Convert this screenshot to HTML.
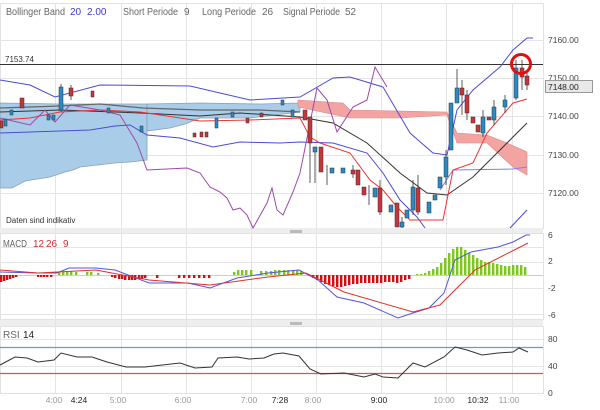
<!DOCTYPE html>
<html><head><meta charset="utf-8"><style>
body{margin:0;width:600px;height:410px;background:#fff;overflow:hidden;font-family:"Liberation Sans",sans-serif}
svg{position:absolute;left:0;top:0}
text{font-family:"Liberation Sans",sans-serif}
</style></head><body>
<svg width="600" height="410" viewBox="0 0 600 410">
<rect width="600" height="410" fill="#fff"/>
<rect x="0.5" y="3.5" width="543" height="225" fill="none" stroke="#e2e2e2"/>
<rect x="0.5" y="233.5" width="543" height="86" fill="none" stroke="#e2e2e2"/>
<rect x="0.5" y="326.5" width="543" height="67" fill="none" stroke="#e2e2e2"/>
<rect x="0" y="228" width="543" height="5" fill="#eee"/>
<rect x="0" y="320" width="543" height="6" fill="#eee"/>
<rect x="290" y="230" width="12" height="3" fill="#bbb"/>
<rect x="290" y="322" width="12" height="3" fill="#bbb"/>
<g stroke="#e4e4e4" stroke-width="1">
<path d="M55.5 4V393M121.5 4V393M186.5 4V393M251.5 4V393M316.5 4V393M381.5 4V393M446.5 4V393M512.5 4V393"/>
<path d="M0 40.5H543M0 78.5H543M0 116.5H543M0 155.5H543M0 193.5H543"/>
<path d="M0 247.5H543M0 262.5H543M0 288.5H543M0 314.5H543M0 339.5H543M0 366.5H543"/>
</g>
<path d="M0 103L60 104L140 104L147 104L147 160L130 162L115 163L80 167L73 170L65 172L50 177L25 181L12 188L0 188Z" fill="#a9cde8" stroke="#8aa0b0" stroke-width="0.8"/>
<path d="M147 104L200 103L260 104L300 103L300 112L250 118L200 118L185 124L170 128L147 131Z" fill="#a9cde8" stroke="#8aa0b0" stroke-width="0.8"/>
<path d="M298 100L343 103L350 110L447 112L457 133L487 135L507 143L527 152L527 175L513 167L487 143L457 143L447 115L400 118L350 118L298 107Z" fill="#f4a3a3" stroke="#d88" stroke-width="0.6"/>
<path d="M0 64.5H543" stroke="#333" stroke-width="1"/>
<g fill="none" stroke="#4b4bd6" stroke-width="1">
<path d="M0 80L30 85L55 97L100 85L190 86L250 100L300 97L333 78L350 77L383 87L410 133L433 153L447 155L457 110L473 90L500 67L513 50L527 38L533 38"/>
<path d="M0 133L60 131L90 130L115 126L130 125L147 135L180 138L213 147L240 142L280 143L300 142L333 143L367 153L383 173L400 200L417 217L425 228"/>
<path d="M510 228L527 210"/>
<path d="M440 190L453 170L513 169L527 167" stroke="#8080e8"/>
</g>
<path d="M0 112L60 110L140 113L200 116L240 113L300 117L333 123L367 143L400 173L427 193L447 195L473 177L500 150L527 123" fill="none" stroke="#333" stroke-width="1"/>
<path d="M0 108L60 106L100 104L143 108L200 110L260 110L300 112" fill="none" stroke="#666" stroke-width="1.2"/>
<path d="M0 120L30 118L60 112L100 110L140 112L200 121L250 120L300 118L310 137L320 143L350 153L370 180L383 190L397 207L410 220L443 220L453 170L473 163L487 133L513 103L527 99" fill="none" stroke="#e33" stroke-width="1"/>
<path d="M0 118L30 125L45 110L55 122L70 105L100 110L120 115L137 143L147 170L187 168L200 173L210 187L220 192L227 198L233 210L240 208L247 215L253 228L267 203L272 188L277 210L283 215L293 192L300 173L308 133L317 88L327 100L337 132L353 107L367 100L375 67L387 87" fill="none" stroke="#9a4aa8" stroke-width="1"/>
<g stroke="#333" stroke-width="0.8">
<path d="M310 117V183M315 147V183M327 165V185M402 217V228M418 175V215M446 150V185M457 69V103M462 80V115M467 90V120M483 110V137M494 100V125M505 95V113M516 60V100M522 60V90M527 72V90M61 84V112M71 85V100M353 165V178M369 185V205M380 180V215M413 180V215"/>
</g>
<g fill="#2a8ac4" stroke="#333" stroke-width="0.5">
<rect x="4" y="119" width="3" height="7"/><rect x="10" y="110" width="3" height="5"/><rect x="47" y="115" width="3" height="5"/><rect x="52" y="115" width="3" height="5"/><rect x="59" y="87" width="4" height="23"/><rect x="107" y="108" width="3" height="5"/><rect x="140" y="126" width="3" height="6"/><rect x="215" y="118" width="3" height="10"/><rect x="231" y="112" width="3" height="5"/><rect x="281" y="100" width="3" height="5"/><rect x="291" y="110" width="3" height="7"/>
<rect x="313" y="147" width="4" height="5"/><rect x="330" y="168" width="4" height="5"/><rect x="341" y="168" width="4" height="5"/><rect x="373" y="188" width="4" height="9"/><rect x="389" y="205" width="4" height="7"/><rect x="400" y="222" width="4" height="5"/><rect x="405" y="210" width="4" height="8"/><rect x="411" y="187" width="4" height="23"/><rect x="427" y="202" width="4" height="11"/><rect x="433" y="195" width="4" height="5"/><rect x="438" y="177" width="4" height="11"/><rect x="444" y="157" width="4" height="20"/><rect x="449" y="103" width="4" height="47"/><rect x="455" y="88" width="4" height="15"/><rect x="481" y="117" width="4" height="16"/><rect x="492" y="107" width="4" height="13"/><rect x="503" y="100" width="4" height="7"/><rect x="514" y="68" width="4" height="30"/>
</g>
<g fill="#c8343a" stroke="#333" stroke-width="0.5">
<rect x="0" y="121" width="3" height="7"/><rect x="20" y="98" width="4" height="10"/><rect x="69" y="88" width="4" height="8"/><rect x="91" y="91" width="3" height="6"/><rect x="193" y="133" width="3" height="4"/><rect x="200" y="132" width="3" height="5"/><rect x="205" y="132" width="3" height="5"/><rect x="246" y="118" width="3" height="5"/><rect x="260" y="113" width="3" height="4"/>
<rect x="303" y="110" width="4" height="10"/><rect x="308" y="117" width="4" height="26"/><rect x="319" y="147" width="4" height="25"/><rect x="351" y="170" width="4" height="4"/><rect x="356" y="170" width="4" height="15"/><rect x="362" y="187" width="4" height="8"/><rect x="378" y="188" width="4" height="24"/><rect x="395" y="203" width="4" height="24"/><rect x="416" y="188" width="4" height="24"/><rect x="460" y="88" width="4" height="7"/><rect x="465" y="95" width="4" height="18"/><rect x="471" y="117" width="4" height="6"/><rect x="476" y="125" width="4" height="7"/><rect x="487" y="117" width="4" height="3"/><rect x="520" y="68" width="4" height="9"/><rect x="525" y="76" width="4" height="9"/>
</g>
<circle cx="521" cy="64" r="9.5" fill="none" stroke="#e01010" stroke-width="3"/>
<g font-size="10" fill="#666">
<text x="6" y="15" textLength="59" lengthAdjust="spacingAndGlyphs">Bollinger Band</text><text x="70" y="15" fill="#3a3acc">20</text><text x="87" y="15" fill="#3a3acc">2.00</text>
<text x="123" y="15" textLength="55" lengthAdjust="spacingAndGlyphs">Short Periode</text><text x="184" y="15">9</text>
<text x="202" y="15" textLength="54" lengthAdjust="spacingAndGlyphs">Long Periode</text><text x="262" y="15">26</text>
<text x="283" y="15" textLength="57" lengthAdjust="spacingAndGlyphs">Signal Periode</text><text x="345" y="15">52</text>
</g>
<text x="5" y="62" font-size="8" fill="#333">7153.74</text>
<text x="6" y="223" font-size="8" fill="#333">Daten sind indikativ</text>
<g font-size="8.5" fill="#444">
<text x="548" y="43">7160.00</text><text x="548" y="81">7150.00</text><text x="548" y="119">7140.00</text><text x="548" y="158">7130.00</text><text x="548" y="196">7120.00</text>
</g>
<rect x="545.5" y="80.5" width="47" height="12" fill="#e8e8e8" stroke="#999"/>
<text x="548" y="90" font-size="8.5" fill="#222">7148.00</text>
<path d="M0 275.5H543" stroke="#ccc"/>
<g fill="#d01010">
<rect x="0" y="275" width="2.4" height="7"/><rect x="3" y="275" width="2.4" height="6"/><rect x="6" y="275" width="2.4" height="5"/><rect x="9" y="275" width="2.4" height="4"/><rect x="12" y="275" width="2.4" height="3"/><rect x="15" y="275" width="2.4" height="2"/>
<rect x="37" y="275" width="2.4" height="2"/><rect x="40" y="275" width="2.4" height="2"/><rect x="43" y="275" width="2.4" height="2"/><rect x="46" y="275" width="2.4" height="2"/><rect x="50" y="275" width="2.4" height="2"/>
<rect x="111" y="275" width="2.4" height="2"/><rect x="114" y="275" width="2.4" height="3"/><rect x="118" y="275" width="2.4" height="4"/><rect x="121" y="275" width="2.4" height="4"/><rect x="124" y="275" width="2.4" height="5"/><rect x="128" y="275" width="2.4" height="5"/><rect x="131" y="275" width="2.4" height="5"/><rect x="134" y="275" width="2.4" height="5"/><rect x="138" y="275" width="2.4" height="4"/><rect x="141" y="275" width="2.4" height="4"/><rect x="144" y="275" width="2.4" height="3"/><rect x="156" y="275" width="2.4" height="3"/>
<rect x="178" y="275" width="2.4" height="3"/><rect x="183" y="275" width="2.4" height="3"/><rect x="188" y="275" width="2.4" height="3"/><rect x="193" y="275" width="2.4" height="3"/><rect x="198" y="275" width="2.4" height="3"/><rect x="203" y="275" width="2.4" height="3"/><rect x="208" y="275" width="2.4" height="3"/>
<rect x="312" y="275" width="2.4" height="3"/><rect x="316" y="275" width="2.4" height="5"/><rect x="320" y="275" width="2.4" height="7"/><rect x="324" y="275" width="2.4" height="9"/><rect x="328" y="275" width="2.4" height="10"/><rect x="332" y="275" width="2.4" height="11"/><rect x="336" y="275" width="2.4" height="12"/><rect x="340" y="275" width="2.4" height="12"/><rect x="344" y="275" width="2.4" height="11"/><rect x="348" y="275" width="2.4" height="10"/><rect x="352" y="275" width="2.4" height="9"/><rect x="356" y="275" width="2.4" height="9"/><rect x="360" y="275" width="2.4" height="8"/><rect x="364" y="275" width="2.4" height="8"/><rect x="368" y="275" width="2.4" height="8"/><rect x="372" y="275" width="2.4" height="8"/><rect x="376" y="275" width="2.4" height="8"/><rect x="380" y="275" width="2.4" height="8"/><rect x="384" y="275" width="2.4" height="7"/><rect x="388" y="275" width="2.4" height="7"/><rect x="392" y="275" width="2.4" height="7"/><rect x="396" y="275" width="2.4" height="8"/><rect x="400" y="275" width="2.4" height="7"/><rect x="404" y="275" width="2.4" height="5"/><rect x="408" y="275" width="2.4" height="4"/>
</g>
<g fill="#7cc81e">
<rect x="58" y="272" width="2.4" height="3"/><rect x="62" y="272" width="2.4" height="3"/><rect x="66" y="271" width="2.4" height="4"/><rect x="70" y="271" width="2.4" height="4"/><rect x="75" y="272" width="2.4" height="3"/><rect x="86" y="272" width="2.4" height="3"/><rect x="90" y="272" width="2.4" height="3"/><rect x="97" y="273" width="2.4" height="2"/>
<rect x="233" y="272" width="2.4" height="3"/><rect x="237" y="270" width="2.4" height="5"/><rect x="241" y="270" width="2.4" height="5"/><rect x="245" y="270" width="2.4" height="5"/><rect x="250" y="270" width="2.4" height="5"/>
<rect x="260" y="271" width="2.4" height="4"/><rect x="265" y="271" width="2.4" height="4"/><rect x="270" y="271" width="2.4" height="4"/><rect x="274" y="270" width="2.4" height="5"/><rect x="278" y="270" width="2.4" height="5"/><rect x="283" y="270" width="2.4" height="5"/><rect x="287" y="270" width="2.4" height="5"/><rect x="292" y="270" width="2.4" height="5"/><rect x="296" y="270" width="2.4" height="5"/><rect x="300" y="271" width="2.4" height="4"/>
<rect x="416" y="274" width="2.4" height="1"/><rect x="420" y="274" width="2.4" height="1"/><rect x="424" y="273" width="2.4" height="2"/><rect x="428" y="271" width="2.4" height="4"/><rect x="432" y="269" width="2.4" height="6"/><rect x="436" y="267" width="2.4" height="8"/><rect x="440" y="263" width="2.4" height="12"/><rect x="444" y="258" width="2.4" height="17"/><rect x="448" y="253" width="2.4" height="22"/><rect x="452" y="249" width="2.4" height="26"/><rect x="456" y="247" width="2.4" height="28"/><rect x="460" y="247" width="2.4" height="28"/><rect x="464" y="250" width="2.4" height="25"/><rect x="468" y="253" width="2.4" height="22"/><rect x="472" y="255" width="2.4" height="20"/><rect x="476" y="258" width="2.4" height="17"/><rect x="480" y="260" width="2.4" height="15"/><rect x="484" y="262" width="2.4" height="13"/><rect x="488" y="262" width="2.4" height="13"/><rect x="492" y="263" width="2.4" height="12"/><rect x="496" y="264" width="2.4" height="11"/><rect x="500" y="265" width="2.4" height="10"/><rect x="504" y="266" width="2.4" height="9"/><rect x="508" y="266" width="2.4" height="9"/><rect x="512" y="265" width="2.4" height="10"/><rect x="516" y="265" width="2.4" height="10"/><rect x="520" y="265" width="2.4" height="10"/><rect x="524" y="267" width="2.4" height="8"/>
</g>
<path d="M0 272L38 273L57 273L69 268L96 268L115 270L149 283L188 283L210 288L237 278L268 273L299 270L318 280L337 297L364 303L398 318L413 313L429 308L444 293L455 260L471 252L498 247L513 242L526 235L530 235" fill="none" stroke="#5555dd" stroke-width="1"/>
<path d="M0 270L38 273L96 270L149 280L210 285L268 277L306 273L344 292L413 312L440 305L475 270L528 243" fill="none" stroke="#e03030" stroke-width="1"/>
<g font-size="10" fill="#666"><text x="3" y="247" textLength="24" lengthAdjust="spacingAndGlyphs">MACD</text><text x="33" y="247" fill="#d03030">12</text><text x="46" y="247" fill="#d03030">26</text><text x="63" y="247" fill="#d03030">9</text></g>
<g font-size="8.5" fill="#444"><text x="548" y="238">6</text><text x="548" y="264">2</text><text x="548" y="291">-2</text><text x="548" y="318">-6</text>
<text x="548" y="342">80</text><text x="548" y="369">40</text><text x="548" y="396">0</text></g>
<path d="M0 347.5H543" stroke="#6a9fb5" stroke-width="1.2"/>
<path d="M0 373.5H543" stroke="#e05050" stroke-width="1.2"/>
<path d="M0 365L15 357L27 358L38 362L54 360L61 353L77 357L92 357L107 362L126 367L145 367L180 363L195 368L212 367L218 358L237 357L249 359L264 358L274 354L283 353L299 356L310 369L321 374L344 373L364 377L375 374L383 377L398 378L413 363L425 367L444 357L455 347L467 350L482 355L498 353L513 352L519 348L528 352" fill="none" stroke="#333" stroke-width="1"/>
<g font-size="10" fill="#666"><text x="3" y="338">RSI</text><text x="23" y="338" fill="#222">14</text></g>
<g font-size="8.5" fill="#999" text-anchor="middle">
<text x="54" y="403">4:00</text><text x="118" y="403">5:00</text><text x="183" y="403">6:00</text><text x="249" y="403">7:00</text><text x="313" y="403">8:00</text><text x="444" y="403">10:00</text><text x="509" y="403">11:00</text>
</g>
<g font-size="8.5" fill="#222" text-anchor="middle">
<text x="79" y="403">4:24</text><text x="280" y="403">7:28</text><text x="379" y="403">9:00</text><text x="478" y="403">10:32</text>
</g>
</svg>
</body></html>
